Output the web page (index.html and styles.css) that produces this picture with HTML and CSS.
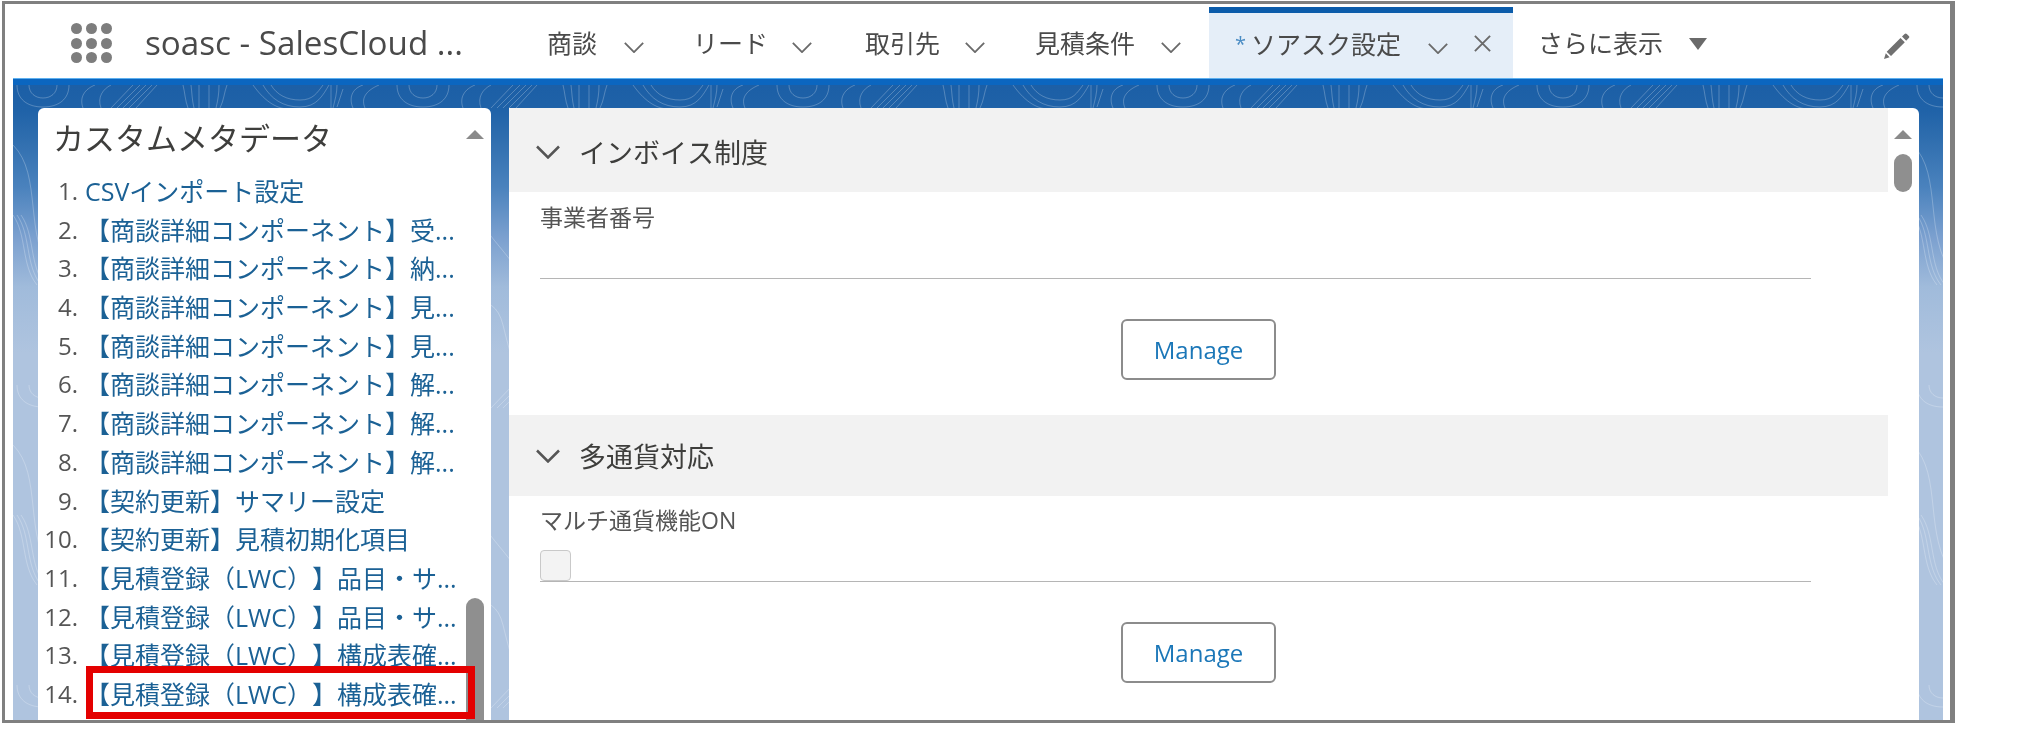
FILE: index.html
```html
<!DOCTYPE html>
<html lang="ja">
<head>
<meta charset="utf-8">
<title>カスタムメタデータ</title>
<link rel="stylesheet" href="styles.css">
</head>
<body>
<div class="frame">
  <header class="nav">
    <div class="launcher">
      <i></i><i></i><i></i><i></i><i></i><i></i><i></i><i></i><i></i>
    </div>
    <div class="app-name">soasc - SalesCloud ...</div>
    <nav class="tabs">
      <div class="tab t1"><span>商談</span><svg class="chev" viewBox="0 0 24 12"><path d="M2 1l10 10L22 1"/></svg></div>
      <div class="tab t2"><span>リード</span><svg class="chev" viewBox="0 0 24 12"><path d="M2 1l10 10L22 1"/></svg></div>
      <div class="tab t3"><span>取引先</span><svg class="chev" viewBox="0 0 24 12"><path d="M2 1l10 10L22 1"/></svg></div>
      <div class="tab t4"><span>見積条件</span><svg class="chev" viewBox="0 0 24 12"><path d="M2 1l10 10L22 1"/></svg></div>
      <div class="tab active">
        <span class="star">*</span><span>ソアスク設定</span>
        <svg class="chev" viewBox="0 0 24 12"><path d="M2 1l10 10L22 1"/></svg>
        <svg class="close" viewBox="0 0 20 20"><path d="M2 2l16 16M18 2L2 18"/></svg>
      </div>
      <div class="tab more"><span>さらに表示</span><svg class="tri" viewBox="0 0 18 12"><path d="M0 0h18L9 12z"/></svg></div>
    </nav>
    <svg class="pencil" viewBox="0 0 27 26"><path d="M19 3.500l2.600-2.600a1.600 1.600 0 0 1 2.200 0l2 2a1.600 1.600 0 0 1 0 2.200L23.200 7.700zM17.500 5l4.300 4.200L8 23 3.700 18.700zM2.800 20.300l3.800 3.900L1 26z"/></svg>
  </header>

  <main class="desk">
    <svg class="topo" aria-hidden="true">
      <defs>
        <pattern id="contour" width="380" height="300" patternUnits="userSpaceOnUse">
          <g fill="none" stroke="#ffffff" stroke-opacity=".24" stroke-width="1">
            <path d="M4 0C4 14 14 22 30 22S56 14 56 0M16 0C16 8 22 13 30 13S44 8 44 0"/>
            <path d="M70 23C66 12 72 4 82 0M88 23C84 12 90 4 98 0"/>
            <path d="M98 23L120 0M104 23L127 0M110 23L133 0M116 23L139 0M123 23L144 0"/>
            <path d="M170 0c2 8 2 15 5 23M178 0c1 8 1 15 3 23M186 0v23M196 0v23M206 0c0 8-1 15-3 23M214 0c-3 8-3 15-7 23"/>
            <path d="M250 0C258 14 270 22 287 22S310 10 316 0M258 0C264 10 274 15 287 15S304 8 310 0M240 0C250 14 262 24 276 24"/>
            <path d="M318 0v23M324 0c0 8-2 15-4 23M330 4l-6 18M350 0C338 4 336 14 340 23M366 0C352 6 348 14 352 23"/>
            <path d="M0 60c30 30 10 90 40 130s60 10 70 50 10 40 30 60M60 40c20 30 10 70 30 100s40 40 60 100M220 60c40 20 60 60 50 100s30 60 40 80M320 50c30 30 20 80 50 110"/>
            <path d="M340 40c20 30 30 70 40 90M0 130c14 20 8 50 24 70M4 130c14 20 8 50 24 70M8 130c14 20 8 50 24 70"/>
          </g>
        </pattern>
      </defs>
      <rect width="100%" height="100%" fill="url(#contour)"/>
    </svg>

    <section class="card side">
      <div class="side-head">
        <h2>カスタムメタデータ</h2>
      </div>
      <ol class="meta-list">
        <li><b>1.</b><a>CSVインポート設定</a></li>
        <li><b>2.</b><a>【商談詳細コンポーネント】受...</a></li>
        <li><b>3.</b><a>【商談詳細コンポーネント】納...</a></li>
        <li><b>4.</b><a>【商談詳細コンポーネント】見...</a></li>
        <li><b>5.</b><a>【商談詳細コンポーネント】見...</a></li>
        <li><b>6.</b><a>【商談詳細コンポーネント】解...</a></li>
        <li><b>7.</b><a>【商談詳細コンポーネント】解...</a></li>
        <li><b>8.</b><a>【商談詳細コンポーネント】解...</a></li>
        <li><b>9.</b><a>【契約更新】サマリー設定</a></li>
        <li><b>10.</b><a>【契約更新】見積初期化項目</a></li>
        <li><b>11.</b><a>【見積登録（LWC）】品目・サ...</a></li>
        <li><b>12.</b><a>【見積登録（LWC）】品目・サ...</a></li>
        <li><b>13.</b><a>【見積登録（LWC）】構成表確...</a></li>
        <li class="marked"><b>14.</b><a>【見積登録（LWC）】構成表確...</a></li>
      </ol>
      <div class="scroll-up"></div>
      <div class="thumb side-thumb"></div>
    </section>

    <section class="card content">
      <div class="sec">
        <div class="sec-head"><svg class="sec-chev" viewBox="0 0 26 14"><path d="M2 1.500l11 11 11-11"/></svg><h3>インボイス制度</h3></div>
        <div class="field">
          <label>事業者番号</label>
          <div class="value"></div>
        </div>
        <div class="actions"><button type="button">Manage</button></div>
      </div>
      <div class="sec">
        <div class="sec-head"><svg class="sec-chev" viewBox="0 0 26 14"><path d="M2 1.500l11 11 11-11"/></svg><h3>多通貨対応</h3></div>
        <div class="field">
          <label>マルチ通貨機能ON</label>
          <div class="value"><span class="check"></span></div>
        </div>
        <div class="actions"><button type="button">Manage</button></div>
      </div>
      <div class="scroll-up"></div>
      <div class="thumb main-thumb"></div>
    </section>
  </main>
</div>
</body>
</html>
```
FILE: styles.css
```css
*, *::before, *::after { box-sizing: border-box; }
html, body { margin: 0; height: 100%; background: #fff; overflow: hidden; }
body {
  font-family: "Open Sans", "Noto Sans CJK JP", sans-serif;
  color: #444;
  width: 2027px;
  height: 730px;
  text-spacing-trim: space-all;
  font-kerning: none;
}
.frame {
  width: 1953px;
  height: 722px;
  margin: 1px 0 0 2px;
  border: solid #808080;
  border-width: 3px 5px 3px 3px;
  padding: 0 7px 0 8px;
  background: #fff;
  display: flex;
  flex-direction: column;
  filter: blur(0.45px);
}
.nav {
  height: 75px;
  flex: none;
  display: flex;
  align-items: center;
  background: #fff;
  position: relative;
}
.launcher {
  margin: 3px 0 0 58px;
  width: 41px;
  height: 40px;
  display: grid;
  grid-template-columns: repeat(3, 11px);
  grid-auto-rows: 11px;
  justify-content: space-between;
  align-content: space-between;
  flex: none;
}
.launcher i { background: #7d7d7d; border-radius: 50%; }
.app-name {
  margin: 2px 0 0 33px;
  width: 402px;
  font-size: 33.2px;
  line-height: 40px;
  color: #4a4a4a;
  white-space: nowrap;
  flex: none;
}
.tabs { display: flex; height: 75px; flex: none; }
.tab {
  display: flex;
  align-items: center;
  font-size: 25px;
  color: #4a4a4a;
  white-space: nowrap;
}
.chev { width: 22px; height: 11px; margin-top: 11px; flex: none; }
.chev path { fill: none; stroke: #6a6a6a; stroke-width: 2; }
.t1 { gap: 26px; width: 146px; }
.t2 { gap: 23px; width: 172px; }
.t3 { gap: 24px; width: 170px; }
.t4 { gap: 25px; width: 174px; }
.active {
  width: 304px;
  height: 71px;
  margin-top: 3px;
  padding: 0 0 5px 26px;
  background: #e5eef8;
  border-top: 6px solid #0b5cab;
}
.star { color: #4a8cc4; font-size: 20px; margin-right: 5px; }
.active .chev { margin-left: 26px; }
.close { width: 19px; height: 19px; margin-left: 24px; flex: none; }
.close path { fill: none; stroke: #6a6a6a; stroke-width: 2; }
.more { padding-left: 25px; gap: 26px; }
.tri { width: 18px; height: 12px; margin-top: 5px; flex: none; }
.tri path { fill: #6a6a6a; }
.pencil { width: 27px; height: 26px; position: absolute; left: 1870px; top: 29px; }
.pencil path { fill: #707070; }

.desk {
  flex: 1;
  min-height: 0;
  position: relative;
  display: flex;
  gap: 18px;
  padding: 23px 24px 0 25px;
  border-top: 6px solid #0b66c0;
  box-shadow: 0 -1px 0 #5db0ef;
  background: linear-gradient(#1c5fa6 0, #1f62a8 25px, #2e6dae 52px, #4a82bd 102px, #7ba0cf 152px, #a0bbdb 202px, #afc4df 268px);
  background-origin: padding-box;
  background-clip: padding-box;
  overflow: hidden;
}
.topo { position: absolute; inset: 0; width: 100%; height: 100%; }
.card {
  position: relative;
  background: #fff;
  border-radius: 6px 6px 0 0;
}
.side { width: 453px; flex: none; }
.content { flex: 1; }
.side-head { height: 64px; padding: 10px 0 0 15px; }
.side-head h2 {
  margin: 0;
  font-size: 31px;
  line-height: 40px;
  font-weight: 400;
  color: #3e3e3c;
  white-space: nowrap;
}
.meta-list { list-style: none; margin: 0; padding: 0; }
.meta-list li {
  position: relative;
  display: flex;
  height: 38.7px;
  line-height: 38.7px;
  font-size: 25px;
  white-space: nowrap;
}
.meta-list b {
  font-weight: 400;
  font-size: 24px;
  color: #555;
  width: 40px;
  text-align: right;
  flex: none;
}
.meta-list a { color: #1b6195; margin-left: 7px; }
.marked::after {
  content: "";
  position: absolute;
  left: 48px;
  top: -9px;
  width: 389px;
  height: 53px;
  border: 7px solid #e40000;
  z-index: 2;
}
.scroll-up {
  position: absolute;
  top: 22px;
  right: 7px;
  width: 0;
  height: 0;
  border: solid transparent;
  border-width: 0 9px 9px;
  border-bottom-color: #8a8a8a;
}
.thumb { position: absolute; background: #8f8f8f; border-radius: 9px; width: 18px; }
.side-thumb { right: 7px; top: 490px; bottom: 0; border-radius: 9px 9px 0 0; }
.main-thumb { right: 7px; top: 46px; height: 38px; }

.sec { width: 1379px; }
.sec-head {
  height: 84px;
  background: #f2f2f2;
  display: flex;
  align-items: center;
  padding: 3px 0 0 26px;
  gap: 18px;
}
.sec + .sec .sec-head { height: 81px; padding-top: 0; }
.sec-chev { width: 26px; height: 14px; flex: none; }
.sec-chev path { fill: none; stroke: #555; stroke-width: 2.500; }
.sec-head h3 {
  margin: 0;
  font-size: 27px;
  font-weight: 400;
  color: #3e3e3c;
}
.field { padding: 9px 0 0 31px; width: 1302px; }
.sec + .sec .field { padding-top: 8px; }
.field label {
  display: block;
  font-size: 23px;
  line-height: 32px;
  color: #555;
}
.value {
  height: 46px;
  border-bottom: 1px solid #b5b5b5;
  padding-top: 14px;
}
.check {
  display: block;
  width: 31px;
  height: 31px;
  background: #f3f3f3;
  border: 1px solid #c9c9c9;
  border-radius: 4px;
}
.actions { display: flex; justify-content: center; padding: 40px 0 35px; }
button {
  width: 155px;
  height: 61px;
  background: #fff;
  border: 2px solid #8c8c8c;
  border-radius: 6px;
  color: #1b77b8;
  font: 400 24px "Open Sans", sans-serif;
}
```
